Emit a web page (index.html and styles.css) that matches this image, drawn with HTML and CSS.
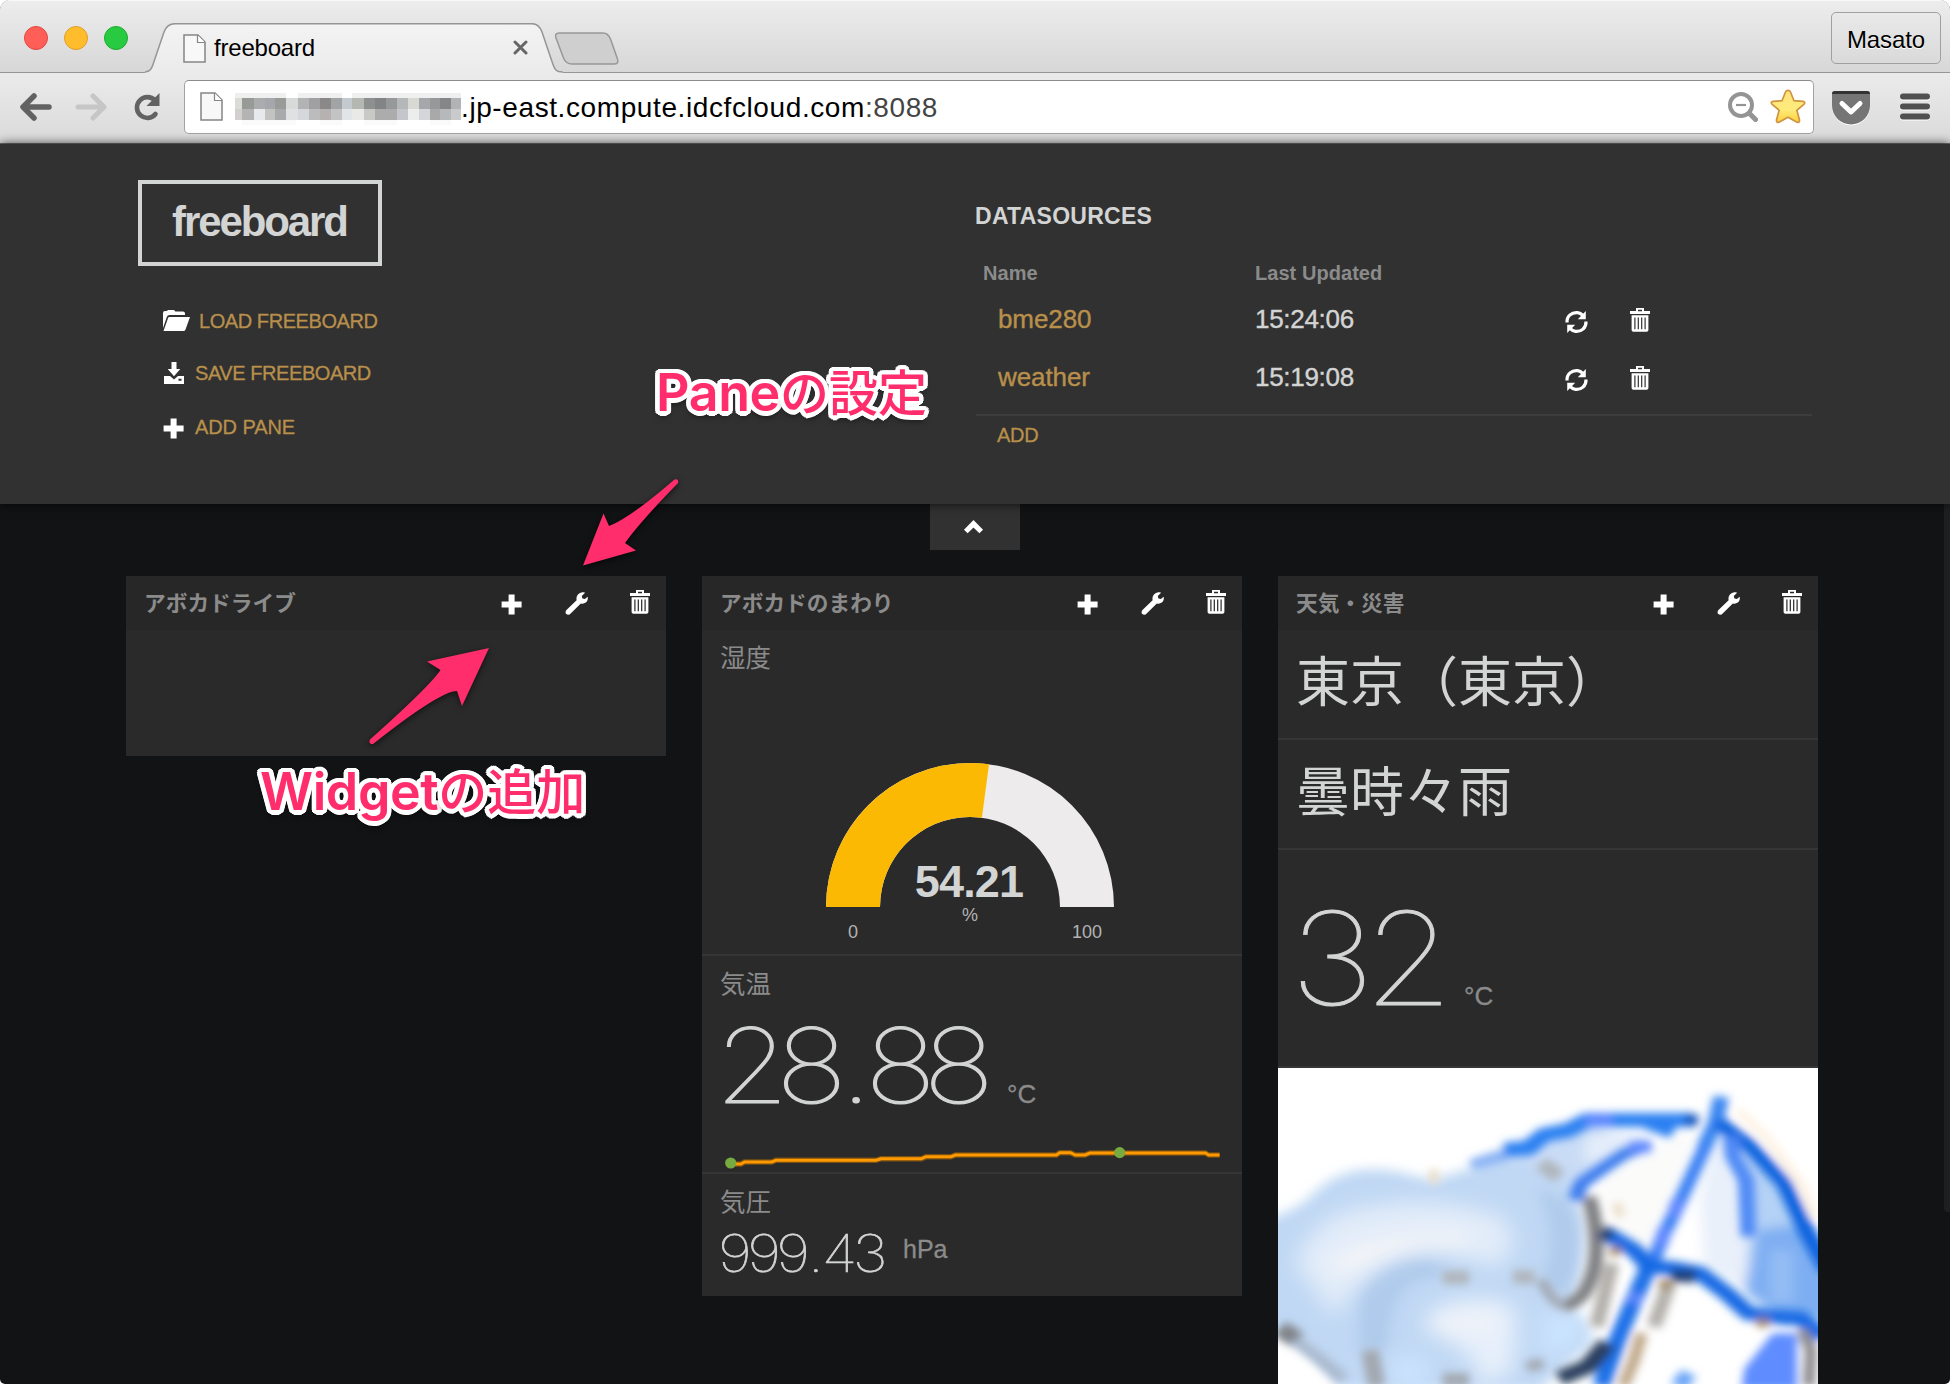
FILE: index.html
```html
<!DOCTYPE html>
<html lang="ja">
<head>
<meta charset="utf-8">
<title>freeboard</title>
<link rel="stylesheet" href="styles.css">
</head>
<body>
<svg class="defs" width="0" height="0" aria-hidden="true">
  <symbol id="plus" viewBox="0 0 21 21"><path d="M7.6 0.5h6v7h7v6h-7v7h-6v-7h-7v-6h7z"/></symbol>
  <symbol id="trash" viewBox="0 0 20 24"><path fill-rule="evenodd" d="M6 0h8v3h6v3H0V3h6zM8 1.7v1.5h4V1.7zM1.6 7.2h16.8V22q0 1.8-1.8 1.8H3.4Q1.6 23.800 1.6 22zM4.300 9.500v11.700h1.200V9.500zM7.700 9.500v11.700h1.200V9.500zM11.100 9.500v11.700h1.200V9.500zM14.500 9.500v11.700h1.200V9.500z"/></symbol>
  <symbol id="wrench" viewBox="0 0 23 23"><path d="M17.500.3c1.300-.3 2.300 0 2.600.4L16.800 4l.6 2.500 2.500.6 2.700-2.300c.6 2.600-.2 4.500-1.800 5.800-1.600 1.200-3.400 1.300-5 .9L5.700 21.600c-1.400 1.600-3.300 1.500-4.400.4-1.200-1.200-1-2.900.4-4.200L11.600 8.200C10.800 3.900 13.700.7 17.500.3z"/></symbol>
  <symbol id="refresh" viewBox="0 0 23 24"><path fill="none" stroke="#fff" stroke-width="3.200" d="M2 12.500C1.600 6 7 2 12.500 2.600c2.500.3 4 1.400 5.600 3M21 11.500c.4 6.500-5 10.500-10.500 9.900-2.500-.3-4-1.400-5.600-3"/><path d="M20.800 1v8.200h-8zM2.200 23v-8.200h8z"/></symbol>
  <symbol id="page" viewBox="0 0 23 29"><path d="M1 1h14l7 7v20H1z" fill="#f8f8f8" stroke="#858585" stroke-width="1.500"/><path d="M14.500 1v7.500H22" fill="#fff" stroke="#858585" stroke-width="1.200"/></symbol>
</svg>

<div class="window">
  <header class="chrome">
    <div class="tabstrip">
      <div class="lights"><i class="close"></i><i class="min"></i><i class="max"></i></div>
      <div class="tab">
        <svg class="tab-shape" viewBox="0 0 418 50"><defs><linearGradient id="tg" x2="0" y2="1"><stop offset="0" stop-color="#f3f3f3"/><stop offset="1" stop-color="#ebebeb"/></linearGradient></defs><path d="M0 50V48.500C5 48.500 6.500 46 8 41.500L19 9Q22 .7 30 .7H387Q394 .7 397 9L408 41.500C409.500 46 411 48.500 418 48.500V50z" fill="url(#tg)"/><path d="M0 49C5 48.800 6.500 46 8 41.500L19 9Q22 .7 30 .7H387Q394 .7 397 9L408 41.500C409.500 46 411 49 418 49" fill="none" stroke="#959595" stroke-width="1.500"/></svg>
        <svg class="favicon"><use href="#page"/></svg>
        <span class="tab-title">freeboard</span>
        <svg class="tab-close" viewBox="0 0 15 15"><path d="M2 2l11 11M13 2L2 13" stroke="#666" stroke-width="3" stroke-linecap="round"/></svg>
      </div>
      <svg class="newtab" viewBox="0 0 65 33"><path d="M5 1H49Q54 1 56.500 7L63.500 27Q65 32 60 32H18Q12 32 9.500 26L2 6Q.5 1 5 1z" fill="#cfcfcf" stroke="#989898" stroke-width="1.500"/></svg>
      <div class="profile">Masato</div>
    </div>
    <div class="toolbar">
      <svg class="nav back" viewBox="0 0 32 28"><path d="M14 3L3 14l11 11M4 14H29" fill="none" stroke="#626262" stroke-width="5.500" stroke-linecap="round" stroke-linejoin="round"/></svg>
      <svg class="nav fwd" viewBox="0 0 32 28"><path d="M18 3l11 11-11 11M28 14H3" fill="none" stroke="#c6c6c6" stroke-width="5" stroke-linecap="round" stroke-linejoin="round"/></svg>
      <svg class="reload" viewBox="0 0 28 28"><path d="M22 7.500A10.400 10.400 0 1 0 22.500 21" fill="none" stroke="#626262" stroke-width="4.600" stroke-linecap="round"/><path d="M26.500 0v13h-13z" fill="#626262"/></svg>
      <div class="omnibox">
        <svg class="favicon"><use href="#page"/></svg>
        <svg class="mosaic" viewBox="567 285 545 95" preserveAspectRatio="none" shape-rendering="crispEdges">
          <path fill="#efefef" d="M567 285H1112V300H567z"/>
          <path fill="#fff" d="M691 285h27v15h-27zM825 285h25v15h-25z"/>
          <path fill="#fafafa" d="M585 366h130v14H585zM771 366h54v14h-54zM877 366h80v14h-80zM1037 366h52v14h-52z"/>
          <path fill="#dcdcd7" d="M567 300h18v33h-18z"/><path fill="#989a98" d="M585 300h27v33h-27z"/><path fill="#aaacad" d="M612 300h27v33h-27z"/><path fill="#a6a7ad" d="M639 300h25v33h-25z"/><path fill="#999b99" d="M664 300h27v33h-27z"/><path fill="#d8dada" d="M691 300h27v33h-27z"/><path fill="#b3b3b5" d="M718 300h27v33h-27z"/><path fill="#a09fa1" d="M745 300h26v33h-26z"/><path fill="#8a8889" d="M771 300h27v33h-27z"/><path fill="#a2a3a5" d="M798 300h27v33h-27z"/><path fill="#c4cbd0" d="M825 300h25v33h-25z"/><path fill="#b5b7b3" d="M850 300h27v33h-27z"/><path fill="#8e8f8f" d="M877 300h27v33h-27z"/><path fill="#838486" d="M904 300h26v33h-26z"/><path fill="#979899" d="M930 300h27v33h-27z"/><path fill="#b4b8b8" d="M957 300h26v33h-26z"/><path fill="#d9d9d4" d="M983 300h27v33h-27z"/><path fill="#a6a7aa" d="M1010 300h27v33h-27z"/><path fill="#97989a" d="M1037 300h25v33h-25z"/><path fill="#868688" d="M1062 300h27v33h-27z"/><path fill="#b1b3b5" d="M1089 300h23v33h-23z"/>
          <path fill="#d3cfcf" d="M567 333h18v33h-18z"/><path fill="#b4b4b4" d="M585 333h27v33h-27z"/><path fill="#e8e9ec" d="M612 333h27v33h-27z"/><path fill="#c3c4c2" d="M639 333h25v33h-25z"/><path fill="#a9aaab" d="M664 333h27v33h-27z"/><path fill="#e0e1e2" d="M691 333h27v33h-27z"/><path fill="#d6d7db" d="M718 333h27v33h-27z"/><path fill="#bdbcbc" d="M745 333h26v33h-26z"/><path fill="#b5b2b1" d="M771 333h27v33h-27z"/><path fill="#c2c3c4" d="M798 333h27v33h-27z"/><path fill="#e2e5e8" d="M825 333h25v33h-25z"/><path fill="#e9e9e7" d="M850 333h27v33h-27z"/><path fill="#c8c9c7" d="M877 333h27v33h-27z"/><path fill="#acacac" d="M904 333h53v33h-53z"/><path fill="#c5c6cb" d="M957 333h26v33h-26z"/><path fill="#eceded" d="M983 333h27v33h-27z"/><path fill="#d5d6d9" d="M1010 333h27v33h-27z"/><path fill="#a9a9a9" d="M1037 333h25v33h-25z"/><path fill="#b7b8b9" d="M1062 333h27v33h-27z"/><path fill="#c9cacc" d="M1089 333h23v33h-23z"/>
        </svg>
        <span class="url">.jp-east.compute.idcfcloud.com<span class="port">:8088</span></span>
        <svg class="zoomicon" viewBox="0 0 30 30"><circle cx="13" cy="13" r="11" fill="none" stroke="#949494" stroke-width="4"/><path d="M21.500 21.500l6 6" stroke="#949494" stroke-width="5" stroke-linecap="round"/><path d="M8 13h10" stroke="#949494" stroke-width="2.200"/></svg>
        <svg class="star" viewBox="0 0 36 35"><defs><linearGradient id="sg" x2="0" y2="1"><stop offset="0" stop-color="#ffe37a"/><stop offset=".6" stop-color="#ffec7c"/><stop offset="1" stop-color="#ffcf3a"/></linearGradient></defs><path d="M18 1.300Q19.800 1.300 20.500 3L24 11.700 33 12.300Q36 13 33.800 15.300L26.800 21.300 29.500 31Q29.600 34 27 33.300L18 28.300 9 33.300Q6.400 34 6.500 31L9.200 21.300 2.200 15.300Q0 13 3 12.300L12 11.700 15.500 3Q16.200 1.300 18 1.300z" fill="url(#sg)" stroke="#cf9440" stroke-width="1.700"/></svg>
      </div>
      <svg class="pocket" viewBox="0 0 38 34"><path d="M0 3Q0 0 3 0H35Q38 0 38 3V14.500A19 19 0 0 1 0 14.500z" fill="#757575"/><path d="M0 3Q0 0 3 0H35Q38 0 38 3z" fill="#333"/><path d="M10 12.500l9 8.500 9-8.500" fill="none" stroke="#fff" stroke-width="5" stroke-linecap="round" stroke-linejoin="round"/></svg>
      <svg class="burger" viewBox="0 0 30 27"><path d="M3 3.500H27M3 13.500H27M3 23.500H27" stroke="#505050" stroke-width="6" stroke-linecap="round"/></svg>
    </div>
  </header>

  <section class="settings">
    <div class="admin">
      <div class="logo">freeboard</div>
      <ul class="menu">
        <li><svg class="i-folder" viewBox="0 0 27 21"><path d="M0 18V3Q0 1 2 1h2q.4-1 1.500-1h5q1.500 0 1.700 1.500H20q2 0 2 2V5H6.500Q4.500 5 3.800 7z"/><path d="M6.500 7H27l-4.500 12.500Q22 21 20.500 21H.5L5 8.200Q5.300 7 6.500 7z"/></svg>LOAD FREEBOARD</li>
        <li><svg class="i-save" viewBox="0 0 20 22"><path d="M7.500 0h5v7h3.800L10 14.200 3.700 7h3.800z"/><path fill-rule="evenodd" d="M0 14h6l4 3.500 4-3.500h6v8H0zM14.500 16.700v2h3v-2z"/></svg>SAVE FREEBOARD</li>
        <li><svg class="i-plus"><use href="#plus"/></svg>ADD PANE</li>
      </ul>
    </div>
    <div class="sources">
      <h2>DATASOURCES</h2>
      <div class="srow head"><span>Name</span><span>Last Updated</span></div>
      <div class="srow"><a>bme280</a><span>15:24:06</span><svg class="i-refresh"><use href="#refresh"/></svg><svg class="i-trash"><use href="#trash"/></svg></div>
      <div class="srow"><a>weather</a><span>15:19:08</span><svg class="i-refresh"><use href="#refresh"/></svg><svg class="i-trash"><use href="#trash"/></svg></div>
      <div class="add">ADD</div>
    </div>
  </section>

  <main class="board">
    <div class="toggle"><svg viewBox="0 0 21 15"><path d="M2.800 11.500l7.700-7.700 7.700 7.700" fill="none" stroke="#fff" stroke-width="5.200"/></svg></div>
    <div class="scrollbar"></div>
    <div class="panes">
      <article class="pane empty">
        <header><h3>アボカドライブ</h3><svg class="i-plus"><use href="#plus"/></svg><svg class="i-wrench"><use href="#wrench"/></svg><svg class="i-trash"><use href="#trash"/></svg></header>
      </article>

      <article class="pane">
        <header><h3>アボカドのまわり</h3><svg class="i-plus"><use href="#plus"/></svg><svg class="i-wrench"><use href="#wrench"/></svg><svg class="i-trash"><use href="#trash"/></svg></header>
        <section class="widget humidity">
          <h4>湿度</h4>
          <svg class="gauge" viewBox="0 0 300 192">
            <path d="M6 150A144 144 0 0 1 294 150H240A90 90 0 0 0 60 150z" fill="#edebeb"/>
            <path d="M6 150A144 144 0 0 1 169 7.260L161.900 60.800A90 90 0 0 0 60 150z" fill="#fbb904"/>
            <text class="gv" x="149" y="139.500">54.21</text>
            <text class="gl" x="150" y="164">%</text>
            <text class="gl" x="33" y="181">0</text>
            <text class="gl" x="267" y="181">100</text>
          </svg>
        </section>
        <section class="widget temp">
          <h4>気温</h4>
          <div class="value big"><span class="num">28<span class="dot">.</span>88</span><span class="unit">°C</span></div>
          <svg class="spark" viewBox="0 0 504 26">
            <path d="M10.700 17H21L24.500 15H51.800L56 13.300H156L161 11.700H201.500L206 9.700H231L235.400 8H336.400L339.700 5.700H350.600L355.300 8H365L370 6H485.400L488.700 8H499.600" fill="none" stroke="#7a5012" stroke-width="5.500"/>
            <path d="M10.700 17H21L24.500 15H51.800L56 13.300H156L161 11.700H201.500L206 9.700H231L235.400 8H336.400L339.700 5.700H350.600L355.300 8H365L370 6H485.400L488.700 8H499.600" fill="none" stroke="#ff9900" stroke-width="3"/>
            <circle cx="10.700" cy="16" r="5.600" fill="#77ab40"/><circle cx="399.700" cy="5.600" r="5.600" fill="#77ab40"/>
          </svg>
        </section>
        <section class="widget pressure">
          <h4>気圧</h4>
          <div class="value mid"><span class="num">999<span class="dot">.</span>43</span><span class="unit">hPa</span></div>
        </section>
      </article>

      <article class="pane">
        <header><h3>天気・災害</h3><svg class="i-plus"><use href="#plus"/></svg><svg class="i-wrench"><use href="#wrench"/></svg><svg class="i-trash"><use href="#trash"/></svg></header>
        <section class="widget line">東京（東京）</section>
        <section class="widget line">曇時々雨</section>
        <section class="widget outside"><div class="value huge"><span class="num">32</span><span class="unit">°C</span></div></section>
        <svg class="picture" viewBox="41 54 1227 948" preserveAspectRatio="none">
          <defs>
            <filter id="b1" x="-10%" y="-10%" width="120%" height="120%"><feGaussianBlur stdDeviation="10 13"/></filter>
            <filter id="b2" x="-10%" y="-10%" width="120%" height="120%"><feGaussianBlur stdDeviation="24 30"/></filter>
            <filter id="b3" x="-10%" y="-10%" width="120%" height="120%"><feGaussianBlur stdDeviation="15 18"/></filter>
          </defs>
          <path fill="#fff" d="M41 54H1268V1002H41z"/>
          <g filter="url(#b3)">
            <path fill="#c9dcf6" d="M480 345L550 300 640 250 740 205 800 240 870 270 790 330 720 430 640 400z"/>
            <path fill="#e4edfa" d="M740 260Q800 240 900 250L820 300 740 350z"/>
            <path fill="#fbfbfa" d="M770 400L860 310 1000 230 960 400 900 640 800 540z"/>
            <path fill="#e9f0fa" d="M1030 260L1060 260 1110 560 1110 720 1010 650 1000 450z"/>
            <path fill="#b4d1f6" d="M1060 250L1170 370 1230 520 1268 600V820L1190 800 1110 740 1110 560 1090 380z"/>
            <path fill="#7eaef2" d="M1130 540L1240 520 1300 620V810H1180L1100 720z"/>
            <path fill="#94bdf4" d="M1160 600H1210V760H1160z"/>
            <path fill="#c0d8f4" d="M10 510Q90 480 130 420 190 345 290 360 330 370 390 390 440 370 520 340 600 320 680 370 740 440 740 560 740 690 700 780 760 820 750 880L680 960 640 1020H180Q160 960 100 890L10 830z"/>
            <path fill="#b0cbec" d="M225 900V740Q250 650 320 625 390 610 430 660L380 690Q300 690 290 900z"/>
            <path fill="#b0cbec" d="M630 420Q700 430 725 520 740 640 690 740L640 680Q680 560 630 420z"/>
          </g>
          <g filter="url(#b2)">
            <path fill="#e2ecf9" d="M80 640Q130 480 250 470 400 430 550 500 600 580 540 650L400 600Q260 610 170 800z"/>
            <path fill="#f6f6f8" d="M150 650Q220 550 460 550 500 600 400 600 280 610 200 670z"/>
            <path fill="#e6effb" d="M390 780Q500 710 580 770 590 870 570 970L500 1010Q500 900 370 840z"/>
            <path fill="#f0f3f8" d="M400 790H540V850H400z"/>
            <path fill="#cae3fe" d="M640 780L730 790 740 870 640 930zM300 920H380V1010H300z"/>
            <path fill="#fff" d="M20 900L90 930 170 1030H20z"/>
          </g>
          <g filter="url(#b1)" fill="none" stroke-linejoin="round">
            <path stroke="#7f8083" stroke-width="34" d="M748 440Q785 620 740 720 730 750 690 770"/>
            <path stroke="#a3a9b3" stroke-width="26" d="M690 770Q660 750 640 690"/>
            <path stroke="#b0b5bb" stroke-width="40" d="M415 682H475M575 680L625 682M640 340L680 380"/>
            <path stroke="#eadcc6" stroke-width="22" d="M395 360V400M810 460L820 500"/>
            <path stroke="#fdf0de" stroke-width="18" d="M1085 180L1150 260 1230 400 1262 500"/>
            <path stroke="#808387" stroke-width="48" d="M45 835L85 870"/>
            <path stroke="#a9b9cf" stroke-width="34" d="M80 870L130 920 190 990"/>
            <path stroke="#a3a8b0" stroke-width="40" d="M250 900L265 1010M415 990H475M620 930L630 960"/>
            <path stroke="#b3b0ab" stroke-width="34" d="M930 700L895 830M800 640L765 830"/>
            <path stroke="#c0a98a" stroke-width="28" d="M868 850L850 930 825 1010"/>
            <path stroke="#86b1f5" stroke-width="32" d="M480 345L560 315"/>
            <path stroke="#2b80f2" stroke-width="42" d="M555 300L610 295 645 255 700 242 745 210H980M880 215L940 245"/>
            <path stroke="#5d87ff" stroke-width="34" d="M740 210H800"/>
            <path stroke="#0d52c0" stroke-width="34" d="M965 205L995 215"/>
            <path stroke="#3a86f1" stroke-width="36" d="M1048 140L1035 220 1010 290"/>
            <path stroke="#3a80f4" stroke-width="32" d="M1015 280L980 380 945 480 912 570 890 650"/>
            <path stroke="#1d6fe8" stroke-width="40" d="M890 630L850 750 815 860 775 1010"/>
            <path stroke="#5d87ff" stroke-width="32" d="M950 450L940 500M920 535L910 590M855 730L850 760"/>
            <path stroke="#0f64df" stroke-width="38" d="M1040 215L1110 285 1190 400 1240 540 1290 660"/>
            <path stroke="#3d7dee" stroke-width="34" d="M715 450L730 400 790 345 830 310 880 285"/>
            <path stroke="#5d87ff" stroke-width="34" d="M840 290H890"/>
            <path stroke="#4f8af6" stroke-width="36" d="M1070 260L1075 320 1105 390 1110 560"/>
            <path stroke="#1269e4" stroke-width="42" d="M780 545L850 600 885 650 940 655 1000 670 1060 730 1110 790 1180 800 1230 805 1280 860"/>
            <path stroke="#1c3e72" stroke-width="38" d="M775 545L800 560M935 678H990"/>
            <path stroke="#a08354" stroke-width="28" d="M800 595L815 612M922 690L920 715M1140 805L1145 830"/>
            <path stroke="#29415f" stroke-width="44" d="M790 880L745 950 680 985"/>
            <path stroke="#5f8dff" fill="#5f8dff" stroke-width="20" d="M1110 960L1170 860 1210 860V1010H1105z"/>
            <path stroke="#6aa6f8" stroke-width="40" d="M975 970L950 1010"/>
            <path stroke="#8f8d90" stroke-width="28" d="M1232 840L1252 900 1247 1010"/>
          </g>
        </svg>
      </article>
    </div>
  </main>

  <div class="note n1">Pane<span>の設定</span></div>
  <div class="note n2">Widget<span>の追加</span></div>
  <svg class="arrow a1" viewBox="580 475 105 95"><path d="M583 565.500L603.500 513.500L609 526Q630 518 674.500 479.500Q679 478.500 678 483Q640 522 625 543L636 550.500z"/></svg>
  <svg class="arrow a2" viewBox="365 640 130 110"><path d="M489 648L462 706L457 691Q440 691 373 744Q368 744 370 739.500Q430 686 440.500 670L427 661.500z"/></svg>
</div>
</body>
</html>
```
FILE: styles.css
```css
* { box-sizing: border-box; }
body { margin: 0; background: #fff; font-family: "Liberation Sans", Arial, "Noto Sans CJK JP", sans-serif; }
h2, h3, h4, ul { margin: 0; padding: 0; font-weight: normal; }
svg { display: block; flex: none; fill: #fff; }
.defs { position: absolute; }
.window { position: relative; width: 1950px; height: 1384px; overflow: hidden; display: flex; flex-direction: column; background: #111314; border-radius: 10px 10px 5px 5px; white-space: nowrap; }

/* browser chrome */
.chrome { height: 144px; flex: none; border-bottom: 1px solid #737373; background: linear-gradient(#ebebeb 72px, #dadada); }
.tabstrip { display: flex; height: 73px; border-bottom: 1px solid #959595; background: linear-gradient(#ededed, #d7d7d7); box-shadow: inset 0 1px #f8f8f8; }
.lights { display: flex; gap: 16px; padding: 26px 0 0 24px; width: 145px; flex: none; }
.lights i { width: 24px; height: 24px; border-radius: 50%; border: 1px solid #e2463f; background: #ff5f57; }
.lights .min { background: #ffbd2e; border-color: #e09e22; }
.lights .max { background: #28ca42; border-color: #1bac2c; }
.tab { position: relative; display: flex; width: 418px; height: 50px; margin-top: 23px; flex: none; padding: 0 28px 0 38px; }
.tab-shape { position: absolute; left: 0; top: 0; width: 418px; height: 50px; }
.tab > :not(.tab-shape) { position: relative; }
.favicon { width: 23px; height: 29px; }
.tab .favicon { margin-top: 11px; }
.tab-title { font-size: 24px; letter-spacing: -0.2px; line-height: 30px; margin: 10px auto 0 8px; }
.tab-close { width: 15px; height: 15px; margin-top: 17px; margin-right: 7px; }
.newtab { width: 65px; height: 33px; margin: 32px auto 0 -9px; }
.profile { width: 110px; height: 52px; margin: 12px 9px 0 0; border: 1px solid #a0a0a0; border-radius: 5px; text-align: center; font-size: 24px; line-height: 53px; letter-spacing: -.1px; text-shadow: 0 1px #fff; }
.toolbar { display: flex; align-items: center; height: 70px; padding: 0 19px 3px 20px; }
.nav { width: 32px; height: 28px; margin-right: 23px; }
.reload { width: 28px; height: 28px; margin: 0 23px 0 3px; }
.omnibox { display: flex; align-items: center; width: 1630px; height: 54px; padding-left: 15px; background: #fff; border: 1px solid #a2a2a2; border-top-color: #8c8c8c; border-radius: 5px; }
.mosaic { width: 226px; height: 32px; margin-left: 12px; margin-top: 5px; }
.url { font-size: 28px; letter-spacing: 0.6px; line-height: 54px; margin: 3px auto 0 0; }
.port { color: #444; }
.zoomicon { width: 30px; height: 30px; margin-right: 12px; }
.star { width: 36px; height: 35px; margin-right: 7px; }
.pocket { width: 38px; height: 34px; margin: 2px 30px 0 18px; filter: drop-shadow(0 1px #fff); }
.burger { width: 30px; height: 27px; filter: drop-shadow(0 1px #fff); }

/* settings panel */
.settings { position: relative; z-index: 1; display: flex; height: 360px; flex: none; padding: 36px 0 0 138px; background: #313131; box-shadow: 0 0 10px rgba(0, 0, 0, .75); }
.admin { width: 838px; }
.logo { width: 244px; height: 86px; border: 4px solid #d3d4d4; padding-left: 30px; color: #d3d4d4; font-weight: bold; font-size: 42px; line-height: 76px; letter-spacing: -2.1px; }
.menu { list-style: none; margin: 35px 0 0 25px; color: #b88f4b; font-size: 20px; letter-spacing: -.43px; -webkit-text-stroke: .3px; }
.menu li { display: flex; align-items: center; height: 40px; margin-bottom: 12px; }
.menu li:nth-child(2) { margin-bottom: 14px; }
.i-folder { width: 27px; height: 21px; margin: -2px 9px 0 0; }
.i-save { width: 20px; height: 22px; margin: 0 11px 0 1px; }
.i-plus { width: 21px; height: 21px; }
.menu .i-plus { margin: 3px 11px 0 0; }
.menu li:last-child { letter-spacing: -.1px; }
.sources { width: 837px; margin-left: -1px; color: #d3d4d4; }
.sources h2 { font-size: 23px; font-weight: bold; line-height: 72px; height: 74px; letter-spacing: .27px; }
.srow { display: grid; grid-template-columns: 257px 310px 65px 20px; align-items: center; height: 58px; padding-left: 23px; font-size: 26px; letter-spacing: -.3px; -webkit-text-stroke: .4px; }
.srow.head { height: 36px; padding: 2px 0 0 8px; grid-template-columns: 272px 311px; font-size: 20px; font-weight: bold; color: #8b8b8b; letter-spacing: .05px; -webkit-text-stroke: 0; }
.srow a { color: #b88f4b; letter-spacing: -.1px; }
.i-refresh { width: 23px; height: 24px; margin-top: 5px; }
.i-trash { width: 20px; height: 24px; }
.sources .i-trash { margin-top: 1px; }
.add { margin: 8px 0 0 1px; border-top: 2px solid #3d3d3d; padding-left: 21px; line-height: 38px; font-size: 20px; color: #b88f4b; letter-spacing: -.3px; -webkit-text-stroke: .3px; }

/* board */
.board { position: relative; flex: 1; display: flex; flex-direction: column; align-items: flex-start; }
.toggle { width: 90px; height: 46px; flex: none; margin-left: 930px; padding: 16px 0 0 33px; background: #313131; }
.toggle svg { width: 21px; height: 15px; }
.scrollbar { position: absolute; right: 0; top: 0; width: 6px; height: 708px; background: #1d1f20; border-radius: 0 0 0 4px; }
.panes { display: grid; grid-template-columns: repeat(3, 540px); column-gap: 36px; align-items: start; margin: 26px 0 0 126px; }
.pane { background: #2a2a2a; }
.pane.empty { height: 180px; }
.pane > header { display: flex; align-items: flex-start; height: 54px; background: #272727; padding: 0 16px 0 18px; }
.pane h3 { font: bold 21.700px/52px "Noto Sans CJK JP", sans-serif; color: #8b8b8b; width: 357px; }
.pane .i-plus { margin: 18px 43px 0 0; }
.i-wrench { width: 23px; height: 23px; margin: 16px 42px 0 0; }
.pane .i-trash { margin-top: 14px; }
.widget { border-bottom: 2px solid #363636; padding: 0 18px; }
.widget:last-child { border-bottom: 0; }
.widget h4 { font: 25.500px/32px "Noto Sans CJK JP", sans-serif; color: #8b8b8b; height: 36px; }
.humidity { height: 326px; padding-top: 10px; overflow: hidden; }
.gauge { width: 300px; height: 192px; margin: 81px 0 0 100px; }
.gauge text { text-anchor: middle; font-family: "Liberation Sans", Arial, sans-serif; }
.gv { font-size: 45px; font-weight: bold; letter-spacing: -.8px; fill: #d3d4d4; }
.gl { font-size: 18px; fill: #b3b3b3; }
.temp { height: 218px; padding-top: 10px; overflow: hidden; }
.value { display: flex; align-items: baseline; }
.num { display: block; font-family: Inter, "Liberation Sans", sans-serif; font-weight: 100; color: #d3d4d4; transform: scaleX(1.15); transform-origin: left; -webkit-text-stroke: 1.2px #d3d4d4; }
.unit { font-size: 26px; color: #8b8b8b; -webkit-text-stroke: .3px; }
.big { height: 114px; line-height: 128px; }
.big .num { width: 289px; margin-left: -5px; font-size: 103.500px; letter-spacing: -11.200px; }
.big .dot { margin: 0 5px; }
.big .unit { margin-left: 3px; }
.spark { width: 504px; height: 26px; margin-top: 31px; }
.pressure { height: 122px; padding-top: 10px; }
.mid { line-height: 68px; }
.mid .num { width: 165px; margin-left: -2px; font-size: 52px; letter-spacing: -4px; -webkit-text-stroke-width: .7px; }
.mid .dot { margin: 0 2px; }
.mid .unit { position: relative; top: -14px; margin-left: 20px; font-size: 25px; }
.line { height: 110px; font: 54px/98px "Noto Sans CJK JP", sans-serif; color: #d3d4d4; }
.outside { height: 218px; }
.huge { height: 216px; line-height: 217px; }
.huge .num { width: 150px; margin-left: -6px; font-size: 129px; letter-spacing: -9.500px; transform: scaleX(1.12); -webkit-text-stroke-width: .9px; }
.huge .unit { margin-left: 24px; }
.picture { width: 540px; height: 316px; }

/* annotations laid over the screen */
.note { position: absolute; z-index: 3; color: #ff2d6b; font-family: Inter, "Noto Sans CJK JP", sans-serif; font-weight: 600; letter-spacing: -.4px; font-size: 52px; line-height: 60px;
  text-shadow: 4.500px 0 #fff, -4.500px 0 #fff, 0 4.500px #fff, 0 -4.500px #fff, 3.200px 3.200px #fff, -3.200px 3.200px #fff, 3.200px -3.200px #fff, -3.200px -3.200px #fff, 4.200px 1.700px #fff, -4.200px 1.700px #fff, 4.200px -1.700px #fff, -4.200px -1.700px #fff, 1.700px 4.200px #fff, -1.700px 4.200px #fff, 1.700px -4.200px #fff, -1.700px -4.200px #fff, 0 5px 7px rgba(0, 0, 0, .7); }
.note span { font-size: 49px; font-weight: 550; letter-spacing: 0; }
.n1 { left: 656px; top: 363px; }
.n2 { left: 260px; top: 762px; }
.arrow { position: absolute; z-index: 3; fill: #ff2d6b; filter: drop-shadow(0 2px 3px rgba(0, 0, 0, .6)); }
.a1 { left: 580px; top: 475px; width: 105px; height: 95px; }
.a2 { left: 365px; top: 640px; width: 130px; height: 110px; }
```
